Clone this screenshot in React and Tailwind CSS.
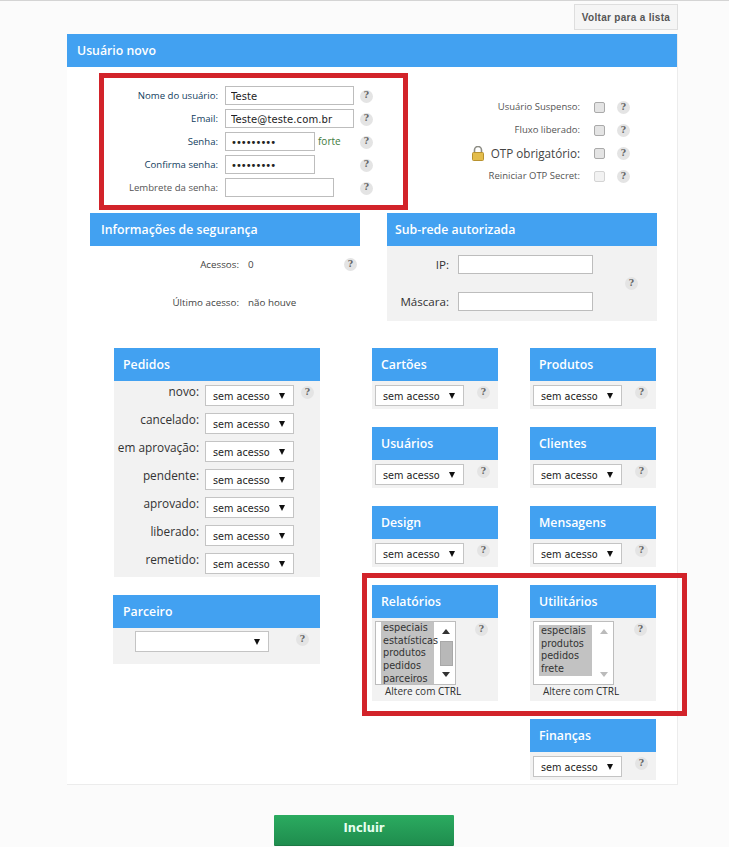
const heading = "flex h-[33px] items-center bg-[#42a1f1] pt-[2px] font-['Open_Sans',sans-serif] text-[12.3px] font-semibold text-white";
const fieldInput = "h-[19px] border border-[#bdbdbd] bg-white pl-[5px] pt-[1px] font-['DejaVu_Sans',sans-serif] text-[#222] outline-none";
const textInput = fieldInput + " text-[10px] tracking-[0.1px]";
const passInput = fieldInput + " w-[90px] text-[10px] tracking-[-1px]";
const label = "pt-[2px] font-['Open_Sans',sans-serif] text-[9.6px] text-right";

function Help({ className = "" }) {
  return (
    <span className={"flex size-[13px] shrink-0 items-center justify-center rounded-full bg-[#e4e4e4] font-['DejaVu_Serif',serif] text-[9px] font-bold text-[#666] " + className}>
      ?
    </span>
  );
}

function Select({ className = "w-[89px]", value = "sem acesso" }) {
  return (
    <div className={"relative h-[21px] shrink-0 " + className}>
      <select
        defaultValue={value}
        className="block h-full w-full appearance-none border border-[#c4c4c4] bg-white pl-[7px] pt-[3px] font-['DejaVu_Sans',sans-serif] text-[9.7px] text-[#222] outline-none"
      >
        <option value={value}>{value}</option>
      </select>
      <svg className="absolute right-[9px] top-[8px]" width="6" height="6" viewBox="0 0 6 6">
        <path d="M0 0H6L3 6Z" fill="#111" />
      </svg>
    </div>
  );
}

function Box({ title, children }) {
  return (
    <section className="w-[126px] bg-[#f2f2f2]">
      <h3 className={heading + " px-[9px]"}>{title}</h3>
      {children}
    </section>
  );
}

function AccessBox({ title }) {
  return (
    <Box title={title}>
      <div className="flex h-[28px] pl-[3px] pt-[4px]">
        <Select />
        <Help className="ml-[13px] mt-[1px]" />
      </div>
    </Box>
  );
}

function ListBox({ title, items, scroll }) {
  return (
    <Box title={title}>
      <div className="relative h-[83px] pl-[3px] pt-[3px]">
        <div className="flex h-[64px] w-[81px] overflow-hidden border border-[#bdbdbd] bg-white">
          <div className={scroll ? "w-[58px] shrink-0 pl-[5px]" : "w-[58px] shrink-0 pl-[5px] pt-[3px]"}>
            <ul className={"w-[53px] bg-[#c2c2c2] pl-[2px] font-['DejaVu_Sans',sans-serif] text-[9.7px] leading-[12.7px] text-[#333]" + (scroll ? " h-[62px] whitespace-nowrap" : " h-[51px]")}>
              {items.map((item) => (
                <li key={item}>{item}</li>
              ))}
            </ul>
          </div>
          <div className="relative ml-auto w-[17px] shrink-0">
            <svg className="absolute left-[4px] top-[7px]" width="8" height="5" viewBox="0 0 8 5">
              <path d="M4 0L8 5H0Z" fill={scroll ? "#333" : "#bbb"} />
            </svg>
            {scroll && <div className="absolute left-[2px] top-[19px] h-[25px] w-[13px] border border-[#a8a8a8] bg-[#b8b8b8]" />}
            <svg className="absolute bottom-[7px] left-[4px]" width="8" height="5" viewBox="0 0 8 5">
              <path d="M0 0H8L4 5Z" fill={scroll ? "#333" : "#bbb"} />
            </svg>
          </div>
        </div>
        <p className="mt-[-1px] pl-[10px] font-['Open_Sans',sans-serif] text-[10px] leading-[14px] text-[#333]">
          Altere com <span className="font-medium text-[#222]">CTRL</span>
        </p>
        <Help className={scroll ? "absolute left-[103px] top-[5px]" : "absolute left-[104px] top-[5px]"} />
      </div>
    </Box>
  );
}

function UserRow({ name, color, children }) {
  return (
    <div className="flex h-[19px] items-center">
      <label className={label + " w-[151px] " + color}>{name}</label>
      <div className="ml-[7px] flex w-[129px] items-center">{children}</div>
      <Help className="ml-[6px] mt-[1px]" />
    </div>
  );
}

function FlagRow({ name, disabled, big, lock }) {
  return (
    <div className="flex h-[19px] items-center justify-end">
      {lock && (
        <svg className="mr-[7px]" width="12" height="15" viewBox="0 0 12 15">
          <path d="M2.5 7V4a3.5 3.5 0 0 1 7 0v3" fill="none" stroke="#8c8c84" strokeWidth="1.6" />
          <rect x="0.5" y="6.5" width="11" height="8" rx="1" fill="#e3bd4c" stroke="#b8922f" />
        </svg>
      )}
      <label className={"font-['Open_Sans',sans-serif] " + (big ? "text-[11.7px] text-[#444]" : "text-[9.5px] text-[#555]")}>{name}</label>
      <input
        type="checkbox"
        disabled={disabled}
        className={"ml-[14px] size-[11px] appearance-none rounded-[2px] border " + (disabled ? "border-[#d4d4d4] bg-[#f2f2f2]" : "border-[#aaa] bg-[#e4e4e4]")}
      />
      <Help className="ml-[12px]" />
    </div>
  );
}

const pedidos = ["novo", "cancelado", "em aprovação", "pendente", "aprovado", "liberado", "remetido"];

export default function App() {
  return (
    <div className="relative h-[847px] overflow-hidden border-t border-[#d4d4d4] bg-[#fbfbfb] font-['Open_Sans',sans-serif]">
      <div className="flex justify-end pr-[51px] pt-[3px]">
        <button className="h-[26px] w-[104px] border border-[#dedede] bg-[#f5f5f5] font-['Liberation_Sans',sans-serif] text-[10px] font-bold tracking-[0.3px] text-[#555]">
          Voltar para a lista
        </button>
      </div>

      <main className="ml-[67px] mt-[4px] w-[611px] border-b border-r border-[#ececec] bg-white">
        <h1 className={heading + " px-[10px]"}>Usuário novo</h1>

        <div className="flex justify-between pb-[16px] pr-[47px] pt-[19px]">
          <div className="flex flex-col gap-[4px]">
            <UserRow name="Nome do usuário:" color="text-[#12405e]">
              <input className={textInput + " w-[129px]"} defaultValue="Teste" />
            </UserRow>
            <UserRow name="Email:" color="text-[#12405e]">
              <input className={textInput + " w-[129px]"} defaultValue="Teste@teste.com.br" />
            </UserRow>
            <UserRow name="Senha:" color="text-[#12405e]">
              <input type="password" className={passInput} defaultValue="123456789" />
              <span className="ml-[3px] font-['Open_Sans',sans-serif] text-[10px] text-[#3f7a3c]">forte</span>
            </UserRow>
            <UserRow name="Confirma senha:" color="text-[#12405e]">
              <input type="password" className={passInput} defaultValue="123456789" />
            </UserRow>
            <UserRow name="Lembrete da senha:" color="text-[#555]">
              <input className={textInput + " w-[109px]"} />
            </UserRow>
          </div>
          <div className="flex flex-col gap-[4px] pt-[12px]">
            <FlagRow name="Usuário Suspenso:" />
            <FlagRow name="Fluxo liberado:" />
            <FlagRow name="OTP obrigatório:" big lock />
            <FlagRow name="Reiniciar OTP Secret:" disabled />
          </div>
        </div>

        <div className="flex pl-[23px]">
          <section className="w-[270px]">
            <h2 className={heading + " px-[11px]"}>Informações de segurança</h2>
            <div className="relative flex h-[75px] flex-col gap-[24px] pt-[12px] text-[9.8px] text-[#444]">
              <div className="flex h-[14px] items-center">
                <span className="w-[149px] text-right">Acessos:</span>
                <span className="ml-[9px]">0</span>
              </div>
              <div className="flex h-[14px] items-center">
                <span className="w-[149px] text-right">Último acesso:</span>
                <span className="ml-[9px]">não houve</span>
              </div>
              <Help className="absolute left-[254px] top-[12px]" />
            </div>
          </section>
          <section className="ml-[27px] w-[270px] bg-[#f2f2f2]">
            <h2 className={heading + " px-[8px]"}>Sub-rede autorizada</h2>
            <div className="relative flex h-[75px] flex-col gap-[18px] pt-[9px] text-[11.6px] text-[#333]">
              <div className="flex h-[19px] items-center">
                <label className="w-[62px] text-right">IP:</label>
                <input className={textInput + " ml-[9px] w-[135px]"} />
              </div>
              <div className="flex h-[19px] items-center">
                <label className="w-[62px] text-right">Máscara:</label>
                <input className={textInput + " ml-[9px] w-[135px]"} />
              </div>
              <Help className="absolute left-[238px] top-[31px]" />
            </div>
          </section>
        </div>

        <div className="mt-[27px] flex pb-[4px] pl-[47px]">
          <div className="flex w-[206px] flex-col gap-[18px]">
            <section className="bg-[#f2f2f2]">
              <h3 className={heading + " px-[9px]"}>Pedidos</h3>
              <div className="relative flex h-[196px] flex-col gap-[7px] pt-[4px]">
                {pedidos.map((item) => (
                  <div key={item} className="flex h-[21px]">
                    <label className="w-[85px] whitespace-nowrap text-right text-[11.8px] leading-[12px] text-[#333]">{item}:</label>
                    <Select className="ml-[6px] w-[89px]" />
                  </div>
                ))}
                <Help className="absolute left-[187px] top-[5px]" />
              </div>
            </section>
            <section className="ml-[-1px] w-[207px] bg-[#f2f2f2]">
              <h3 className={heading + " px-[10px]"}>Parceiro</h3>
              <div className="relative h-[36px] pl-[22px] pt-[3px]">
                <Select className="w-[134px]" value="" />
                <Help className="absolute left-[183px] top-[5px]" />
              </div>
            </section>
          </div>

          <div className="ml-[52px] flex w-[126px] flex-col gap-[18px]">
            <AccessBox title="Cartões" />
            <AccessBox title="Usuários" />
            <AccessBox title="Design" />
            <ListBox title="Relatórios" scroll items={["especiais", "estatísticas", "produtos", "pedidos", "parceiros"]} />
          </div>

          <div className="ml-[32px] flex w-[126px] flex-col gap-[18px]">
            <AccessBox title="Produtos" />
            <AccessBox title="Clientes" />
            <AccessBox title="Mensagens" />
            <ListBox title="Utilitários" items={["especiais", "produtos", "pedidos", "frete"]} />
            <AccessBox title="Finanças" />
          </div>
        </div>
      </main>

      <div className="ml-[274px] mt-[29px]">
        <button className="h-[31px] w-[180px] rounded-[1px] border-b border-[#1d7a45] bg-gradient-to-b from-[#2bab60] to-[#1f8d4e] pb-[2px] font-['DejaVu_Sans',sans-serif] text-[11.5px] font-bold text-[#e6fff0]">
          Incluir
        </button>
      </div>

      {/* marcações vermelhas por cima da tela */}
      <div className="pointer-events-none absolute left-[99px] top-[72px] h-[137px] w-[309px] border-[5px] border-[#d2232a]" />
      <div className="pointer-events-none absolute left-[362px] top-[572px] h-[143px] w-[325px] border-[5px] border-[#d2232a]" />
    </div>
  );
}
